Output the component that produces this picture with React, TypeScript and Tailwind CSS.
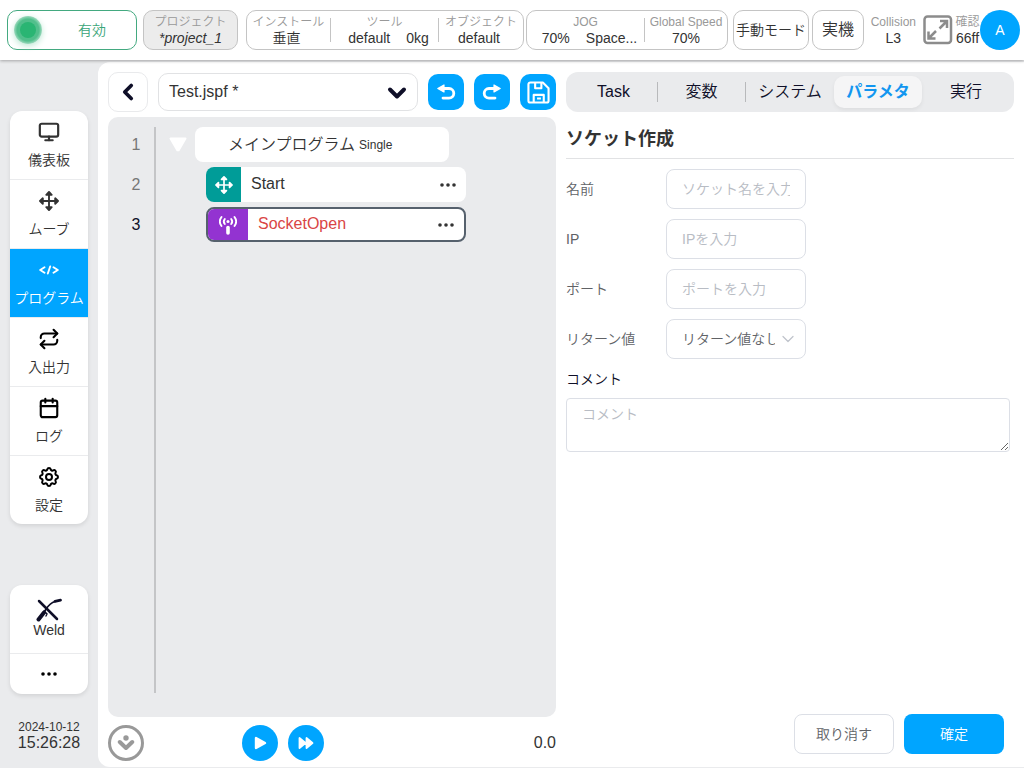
import React from "react";
import { Calendar, ChevronDown, Monitor, Repeat } from "lucide-react";
import { TbSettings } from "react-icons/tb";

interface IconProps {
  className?: string;
}

interface NavItem {
  label: string;
  icon: React.ReactNode;
  active?: boolean;
}

interface Field {
  id: string;
  label: string;
  placeholder: string;
}

const MoveIcon: React.FC<IconProps> = ({ className }) => (
  <svg
    viewBox="0 0 20 20"
    fill="currentColor"
    stroke="currentColor"
    strokeWidth={1.9}
    strokeLinecap="round"
    strokeLinejoin="round"
    className={className}
  >
    <path d="M10 2v16M2 10h16" />
    <path d="M10 1 7.300 3.800h5.400ZM10 19l-2.700-2.800h5.400ZM1 10l2.800-2.700v5.400ZM19 10l-2.800-2.700v5.400Z" />
  </svg>
);

const CodeIcon: React.FC<IconProps> = ({ className }) => (
  <svg
    viewBox="0 0 20 10"
    fill="none"
    stroke="currentColor"
    strokeWidth={1.9}
    strokeLinecap="round"
    strokeLinejoin="round"
    className={className}
  >
    <path d="M5.500 2.200 1.200 5l4.300 2.800M14.500 2.200 18.800 5l-4.300 2.800M11.200 1.500 8.800 8.500" />
  </svg>
);

const WeldIcon: React.FC<IconProps> = ({ className }) => (
  <svg
    viewBox="0 0 26 24"
    fill="none"
    stroke="currentColor"
    strokeLinecap="round"
    className={className}
  >
    <path d="m3 3 18 18" strokeWidth={2.5} />
    <path d="M2.500 21.500 8 14.500" strokeWidth={4} />
    <path d="M8 14c3-4 5-9 11-10.500" strokeWidth={1.7} />
    <path d="m19 3.400 5.500-1.200" strokeWidth={2.8} />
    <path d="m8 13 3 3-1 2" strokeWidth={1.4} />
  </svg>
);

const AntennaIcon: React.FC<IconProps> = ({ className }) => (
  <svg
    viewBox="0 0 18 20"
    fill="none"
    stroke="currentColor"
    strokeWidth={1.9}
    strokeLinecap="round"
    className={className}
  >
    <circle cx="9" cy="6.500" r="1.500" fill="currentColor" stroke="none" />
    <path d="M5.800 4a4 4 0 0 0 0 5M12.200 4a4 4 0 0 1 0 5" />
    <path d="M2.500 2a7.500 7.500 0 0 0 0 9M15.500 2a7.500 7.500 0 0 1 0 9" />
    <path d="M9 12.500v5.500" strokeWidth={3.6} />
  </svg>
);

const UndoIcon: React.FC<IconProps> = ({ className }) => (
  <svg viewBox="0 0 20 18" fill="none" className={className}>
    <path
      d="M6 5.500h7a4.800 4.800 0 0 1 0 9.600H7"
      stroke="currentColor"
      strokeWidth={2.8}
      strokeLinecap="round"
    />
    <path
      d="M8 2v7L1.800 5.500Z"
      fill="currentColor"
      stroke="currentColor"
      strokeWidth={1.2}
      strokeLinejoin="round"
    />
  </svg>
);

const SaveIcon: React.FC<IconProps> = ({ className }) => (
  <svg
    viewBox="0 0 24 24"
    fill="none"
    stroke="currentColor"
    strokeWidth={2.2}
    strokeLinejoin="round"
    className={className}
  >
    <path d="M3.500 1.500H16.500l6 6v13a2 2 0 0 1-2 2h-17a2 2 0 0 1-2-2v-17a2 2 0 0 1 2-2Z" />
    <path d="M8.500 2v5.500h6.500V2M7 22v-7.500h10.500V22M10.500 18.300h4" />
  </svg>
);

const ExpandIcon: React.FC<IconProps> = ({ className }) => (
  <svg
    viewBox="0 0 30 30"
    fill="none"
    stroke="currentColor"
    strokeWidth={2.5}
    className={className}
  >
    <rect x="1.500" y="1.500" width="26.500" height="26.500" rx="3" />
    <path d="M17 6h7v7M23.500 6.500l-7 7M12.500 23.500h-7v-7M6 23l7-7" />
  </svg>
);

const MoreIcon: React.FC<IconProps> = ({ className }) => (
  <svg viewBox="0 0 16 4" fill="currentColor" className={className}>
    <circle cx="2" cy="2" r="1.800" />
    <circle cx="8" cy="2" r="1.800" />
    <circle cx="14" cy="2" r="1.800" />
  </svg>
);

const navItems: NavItem[] = [
  {
    label: "儀表板",
    icon: <Monitor className="h-[22px] w-[22px]" strokeWidth={2.4} />,
  },
  { label: "ムーブ", icon: <MoveIcon className="h-5 w-5" /> },
  { label: "プログラム", icon: <CodeIcon className="h-[10px] w-5" />, active: true },
  {
    label: "入出力",
    icon: <Repeat className="h-[22px] w-[22px] text-black" strokeWidth={2.3} />,
  },
  {
    label: "ログ",
    icon: <Calendar className="h-[22px] w-[22px] text-black" strokeWidth={2.3} />,
  },
  { label: "設定", icon: <TbSettings className="h-6 w-6 text-black" /> },
];

const tabs = ["Task", "変数", "システム", "パラメタ", "実行"];
const activeTab = "パラメタ";

const fields: Field[] = [
  { id: "name", label: "名前", placeholder: "ソケット名を入力" },
  { id: "ip", label: "IP", placeholder: "IPを入力" },
  { id: "port", label: "ポート", placeholder: "ポートを入力" },
];

const Stat: React.FC<{ title: string; children: React.ReactNode }> = ({
  title,
  children,
}) => (
  <div className="flex flex-col items-center whitespace-nowrap">
    <span className="text-xs leading-4 text-[#999]">{title}</span>
    <span className="flex text-sm leading-4">{children}</span>
  </div>
);

const Header = () => (
  <header className="relative z-10 flex h-[60px] shrink-0 items-center bg-white pr-1 pl-[7px] shadow-[0_1px_3px_rgba(0,0,0,0.3)]">
    <button className="flex h-10 w-[130px] items-center rounded-[10px] border border-[#43a980] pl-[6px] text-sm text-[#3aa578]">
      <span className="flex h-7 w-7 items-center justify-center rounded-full bg-[radial-gradient(circle,#52bf8c_55%,#a3dcc2_72%)] shadow-[0_2px_6px_#bfe8d5]">
        <span className="h-4 w-4 rounded-full bg-[#2ab573]" />
      </span>
      <span className="flex-1 pl-[6px]">有効</span>
    </button>

    <button className="ml-[6px] h-10 w-[95px] rounded-[10px] border border-[#c4c4c4] bg-[#ececec]">
      <Stat title="プロジェクト">
        <i>*project_1</i>
      </Stat>
    </button>

    <div className="ml-2 flex h-10 w-[278px] items-center rounded-[10px] border border-[#c4c4c4]">
      <div className="w-[83px]">
        <Stat title="インストール">
          <span className="pr-1">垂直</span>
        </Stat>
      </div>
      <div className="h-6 w-px bg-[#c4c4c4]" />
      <div className="flex-1">
        <Stat title="ツール">
          <span className="pl-2">default</span>
          <span className="pl-4">0kg</span>
        </Stat>
      </div>
      <div className="h-6 w-px bg-[#c4c4c4]" />
      <div className="w-[84px]">
        <Stat title="オブジェクト">
          <span className="pr-1">default</span>
        </Stat>
      </div>
    </div>

    <div className="ml-[2px] flex h-10 w-[202px] items-center rounded-[10px] border border-[#c4c4c4]">
      <div className="flex-1">
        <Stat title="JOG">
          <span className="pl-2">70%</span>
          <span className="pl-4">Space...</span>
        </Stat>
      </div>
      <div className="h-6 w-px bg-[#c4c4c4]" />
      <div className="w-[82px]">
        <Stat title="Global Speed">70%</Stat>
      </div>
    </div>

    <button className="ml-[5px] h-10 w-[76px] rounded-[10px] border border-[#c4c4c4] text-sm whitespace-nowrap">
      手動モード
    </button>
    <button className="ml-[3px] h-10 w-[52px] rounded-[10px] border border-[#c4c4c4] text-base">
      実機
    </button>

    <div className="ml-auto flex items-center">
      <Stat title="Collision">L3</Stat>
      <button aria-label="Expand" className="ml-[7px] text-[#8c8c8c]">
        <ExpandIcon className="h-[30px] w-[30px]" />
      </button>
      <div className="ml-[2px] w-[25px]">
        <Stat title="確認">66ff</Stat>
      </div>
      <button className="h-10 w-10 rounded-full bg-[#00a5ff] text-sm text-white">
        A
      </button>
    </div>
  </header>
);

const Sidebar = () => (
  <aside className="flex w-[98px] shrink-0 flex-col px-[10px] pt-[49px] pb-4">
    <nav className="divide-y divide-[#eaebed] overflow-hidden rounded-xl bg-white shadow-[0_2px_4px_rgba(0,0,0,0.1)]">
      {navItems.map((item) => (
        <a
          key={item.label}
          href="#"
          className={`flex h-[69px] flex-col items-center pt-[9px] text-sm whitespace-nowrap last:h-[68px] ${
            item.active ? "bg-[#00a5ff] text-white" : ""
          }`}
        >
          <span className="flex h-6 items-center">{item.icon}</span>
          <span className="mt-[6px] leading-5">{item.label}</span>
        </a>
      ))}
    </nav>

    <div className="mt-[61px] divide-y divide-[#eaebed] overflow-hidden rounded-xl bg-white shadow-[0_2px_4px_rgba(0,0,0,0.1)]">
      <button className="flex h-[69px] w-full flex-col items-center pt-[13px] text-sm leading-4">
        <WeldIcon className="h-6 w-[26px] text-[#0f0f28]" />
        Weld
      </button>
      <button
        aria-label="More"
        className="flex h-10 w-full items-center justify-center text-black"
      >
        <MoreIcon className="w-4" />
      </button>
    </div>

    <div className="mt-auto flex flex-col items-center">
      <span className="text-xs leading-4">2024-10-12</span>
      <span className="text-base leading-4">15:26:28</span>
    </div>
  </aside>
);

const ProgramPanel = () => (
  <section className="flex min-w-0 flex-1 flex-col">
    <div className="flex h-10 items-center gap-[10px]">
      <button
        aria-label="Back"
        className="flex h-10 w-10 shrink-0 items-center justify-center rounded-[10px] border border-[#e9eaec] text-[#0f0f28]"
      >
        <ChevronDown className="h-[26px] w-[26px] rotate-90" strokeWidth={3.4} />
      </button>
      <div className="relative min-w-0 flex-1">
        <select
          aria-label="Program file"
          className="h-[38px] w-full appearance-none rounded-[10px] border border-[#e1e2e4] pr-10 pl-[10px] text-base"
        >
          <option>Test.jspf *</option>
        </select>
        <ChevronDown
          className="pointer-events-none absolute top-[6px] right-[7px] h-7 w-7 text-[#0f0f28]"
          strokeWidth={3.4}
        />
      </div>
      <button
        aria-label="Undo"
        className="flex h-9 w-9 shrink-0 items-center justify-center rounded-[10px] bg-[#00a5ff] text-white"
      >
        <UndoIcon className="h-[18px] w-5" />
      </button>
      <button
        aria-label="Redo"
        className="flex h-9 w-9 shrink-0 items-center justify-center rounded-[10px] bg-[#00a5ff] text-white"
      >
        <UndoIcon className="h-[18px] w-5 -scale-x-100" />
      </button>
      <button
        aria-label="Save"
        className="flex h-9 w-9 shrink-0 items-center justify-center rounded-[10px] bg-[#00a5ff] text-white"
      >
        <SaveIcon className="h-[23px] w-[23px]" />
      </button>
    </div>

    {/* Program tree */}
    <div className="mt-[5px] flex flex-1 rounded-[10px] bg-[#eaebed] px-[10px] pt-[10px] pb-6">
      <ol className="flex w-9 flex-col gap-[5px] text-center text-base leading-[35px] text-[#777]">
        <li>1</li>
        <li>2</li>
        <li className="text-[#0f0f28]">3</li>
      </ol>
      <div className="w-[2px] bg-[#c4c5c7]" />
      <div className="flex flex-col gap-[5px] pl-[13px]">
        <div className="flex h-[35px] items-center">
          <svg
            viewBox="0 0 18 16"
            className="mr-2 h-4 w-[18px] text-white"
            fill="currentColor"
            stroke="currentColor"
            strokeWidth={2}
            strokeLinejoin="round"
          >
            <path d="M1.500 1.500h15L9.700 13.200h-1.400Z" />
          </svg>
          <div className="flex h-[35px] w-[254px] items-center rounded-lg bg-white pl-[33px] text-base whitespace-nowrap">
            メインプログラム
            <span className="ml-1 text-xs">Single</span>
          </div>
        </div>
        <div className="ml-[37px] flex h-[35px] w-[260px] items-center overflow-hidden rounded-lg bg-white pr-[10px]">
          <span className="flex h-full w-[35px] items-center justify-center bg-[#009c98] text-white">
            <MoveIcon className="h-[18px] w-[18px]" />
          </span>
          <span className="flex-1 pb-[2px] pl-[10px] text-base">Start</span>
          <button aria-label="Start menu">
            <MoreIcon className="w-4" />
          </button>
        </div>
        <div className="ml-[37px] flex h-[35px] w-[260px] items-center overflow-hidden rounded-lg border-2 border-[#56616d] bg-white pr-[10px]">
          <span className="flex h-full w-10 items-center justify-center bg-[#9333d1] text-white">
            <AntennaIcon className="h-5 w-[18px]" />
          </span>
          <span className="flex-1 pb-[2px] pl-[10px] text-base text-[#d94545]">
            SocketOpen
          </span>
          <button aria-label="SocketOpen menu">
            <MoreIcon className="w-4" />
          </button>
        </div>
      </div>
    </div>

    {/* Playback controls */}
    <div className="mt-2 flex items-center">
      <button
        aria-label="Scroll to step"
        className="flex h-9 w-9 items-center justify-center rounded-full border-[3px] border-[#999] text-[#999]"
      >
        <svg viewBox="0 0 18 18" className="h-[18px] w-[18px]" fill="none">
          <circle cx="9" cy="4" r="2.700" fill="currentColor" />
          <path
            d="m2.800 8 6.200 6 6.200-6"
            stroke="currentColor"
            strokeWidth={4}
            strokeLinecap="round"
            strokeLinejoin="round"
          />
        </svg>
      </button>
      <button
        aria-label="Play"
        className="ml-[98px] flex h-9 w-9 items-center justify-center rounded-full bg-[#00a5ff] text-white"
      >
        <svg
          viewBox="0 0 14 14"
          className="h-[14px] w-[14px]"
          fill="currentColor"
          stroke="currentColor"
          strokeWidth={2.4}
          strokeLinejoin="round"
        >
          <path d="M3 2v10l9-5Z" />
        </svg>
      </button>
      <button
        aria-label="Fast forward"
        className="ml-[10px] flex h-9 w-9 items-center justify-center rounded-full bg-[#00a5ff] text-white"
      >
        <svg
          viewBox="0 0 16 14"
          className="h-[14px] w-4"
          fill="currentColor"
          stroke="currentColor"
          strokeWidth={1.8}
          strokeLinejoin="round"
        >
          <path d="M1.500 2v10l6-5ZM8.500 2v10l6-5Z" />
        </svg>
      </button>
      <span className="ml-auto text-base">0.0</span>
    </div>
  </section>
);

const ParameterPanel = () => (
  <section className="flex min-w-0 flex-1 flex-col">
    <div className="grid h-10 grid-cols-5 items-center rounded-xl bg-[#eaebed] px-1 text-base text-[#0f0f28]">
      {tabs.map((tab, index) => (
        <div key={tab} className="flex items-center">
          <button
            className={`h-8 flex-1 rounded-[10px] whitespace-nowrap ${
              tab === activeTab
                ? "bg-[#f5f5f6] font-bold text-[#1296f0] shadow-[0_2px_4px_rgba(0,0,0,0.06)]"
                : ""
            }`}
          >
            {tab}
          </button>
          {index < 2 && <span className="h-5 w-px bg-[#b8b9bb]" />}
        </div>
      ))}
    </div>

    <h2 className="mt-[14px] border-b border-[#e1e2e4] pb-[6px] text-lg leading-[26px] font-bold">
      ソケット作成
    </h2>

    <form className="flex flex-1 flex-col pt-[10px]">
      <div className="flex flex-col gap-[10px] text-sm text-[#606266]">
        {fields.map((field) => (
          <div key={field.id} className="flex items-center">
            <label htmlFor={field.id} className="w-[100px]">
              {field.label}
            </label>
            <input
              id={field.id}
              type="text"
              placeholder={field.placeholder}
              className="h-10 w-[140px] rounded-lg border border-[#dcdfe6] px-[15px] placeholder:text-[#b8bcc4]"
            />
          </div>
        ))}
        <div className="flex items-center">
          <label htmlFor="returnValue" className="w-[100px]">
            リターン値
          </label>
          <div className="relative w-[140px]">
            <select
              id="returnValue"
              className="h-10 w-full appearance-none rounded-lg border border-[#dcdfe6] pr-[30px] pl-[15px]"
            >
              <option>リターン値なし</option>
            </select>
            <ChevronDown
              className="pointer-events-none absolute top-[10px] right-2 h-5 w-5 text-[#c0c4cc]"
              strokeWidth={1.5}
            />
          </div>
        </div>
      </div>

      <label
        htmlFor="comment"
        className="mt-[10px] text-sm leading-5 text-[#0f0f28]"
      >
        コメント
      </label>
      <textarea
        id="comment"
        placeholder="コメント"
        className="mt-[9px] mr-1 h-[54px] rounded-sm border border-[#dcdfe6] px-[15px] py-[5px] text-sm leading-[21px] placeholder:text-[#b8bcc4]"
      />

      <div className="mt-auto mr-[10px] mb-[7px] flex justify-end gap-[10px] text-sm">
        <button
          type="button"
          className="h-10 w-[100px] rounded-lg border border-[#dcdfe6] text-[#606266]"
        >
          取り消す
        </button>
        <button
          type="button"
          className="h-10 w-[100px] rounded-lg bg-[#00a5ff] text-white"
        >
          確定
        </button>
      </div>
    </form>
  </section>
);

const App = () => {
  return (
    <div className="flex min-h-screen flex-col bg-[#eaebed] font-['Liberation_Sans','Noto_Sans_CJK_JP',sans-serif] font-[350] text-[#333]">
      <Header />
      <div className="flex flex-1 pt-[2px] pb-px">
        <Sidebar />
        <main className="flex min-w-0 flex-1 gap-[10px] rounded-l-xl bg-white px-[10px] pt-[10px] pb-[6px]">
          <ProgramPanel />
          <ParameterPanel />
        </main>
      </div>
    </div>
  );
};

export default App;
